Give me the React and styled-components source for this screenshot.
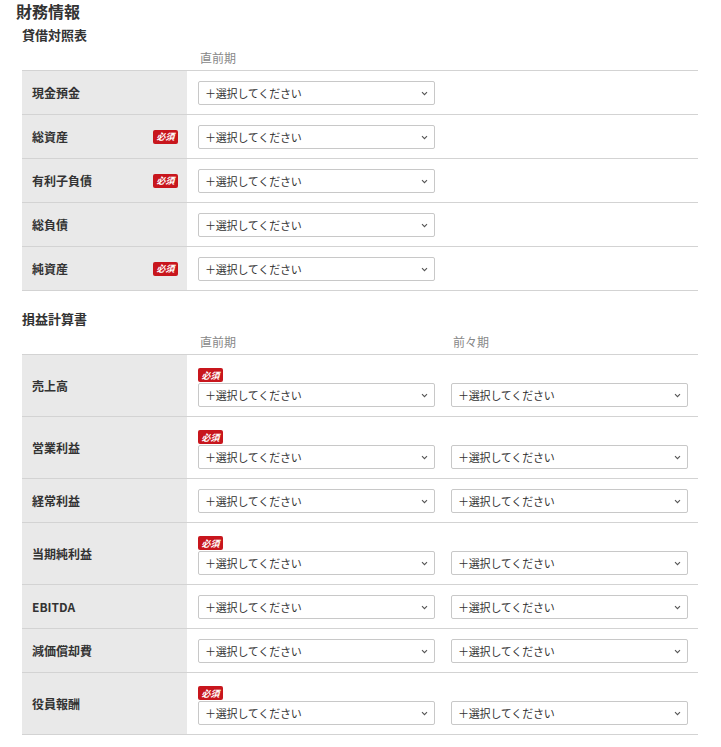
import React from "react";
import styled, { createGlobalStyle } from "styled-components";

const balanceRows = [
  { label: "現金預金" },
  { label: "総資産", required: true },
  { label: "有利子負債", required: true },
  { label: "総負債" },
  { label: "純資産", required: true },
];

const incomeRows = [
  { label: "売上高", required: true },
  { label: "営業利益", required: true },
  { label: "経常利益" },
  { label: "当期純利益", required: true },
  { label: "EBITDA" },
  { label: "減価償却費" },
  { label: "役員報酬", required: true },
];

function Select() {
  return (
    <SelectBox>
      <SelectText>＋選択してください</SelectText>
      <svg width="7" height="5" viewBox="0 0 7 5">
        <path d="M1 1.2l2.5 2.5 2.5-2.5" fill="none" stroke="#555" strokeWidth="1.1" />
      </svg>
    </SelectBox>
  );
}

export default function App() {
  return (
    <Page>
      <GlobalStyle />
      <Title>財務情報</Title>
      <Section>
        <SubTitle>貸借対照表</SubTitle>
        <HeadRow>
          <HeadCell>直前期</HeadCell>
        </HeadRow>
        {balanceRows.map((row) => (
          <Row key={row.label}>
            <LabelCell>
              <span>{row.label}</span>
              {row.required && <Badge>必須</Badge>}
            </LabelCell>
            <ValueCell>
              <Select />
            </ValueCell>
          </Row>
        ))}
      </Section>
      <Section $spaced>
        <SubTitle>損益計算書</SubTitle>
        <HeadRow>
          <HeadCell>直前期</HeadCell>
          <HeadCell>前々期</HeadCell>
        </HeadRow>
        {incomeRows.map((row) => (
          <Row key={row.label}>
            <LabelCell>
              <span>{row.label}</span>
            </LabelCell>
            <ValueCell>
              <Column>
                {row.required && <Badge $block>必須</Badge>}
                <Select />
              </Column>
              <Column>
                <Select />
              </Column>
            </ValueCell>
          </Row>
        ))}
      </Section>
    </Page>
  );
}

const GlobalStyle = createGlobalStyle`
  body {
    margin: 0;
    background: #fff;
    font-family: "Noto Sans CJK JP", "Noto Sans", sans-serif;
    color: #333;
  }
`;

const Page = styled.div`
  width: 721px;
  padding: 0 0 10px 16px;
  box-sizing: border-box;
`;

const Title = styled.h1`
  margin: 0;
  font-size: 16px;
  line-height: 22px;
  font-weight: 700;
  color: #333;
`;

const Section = styled.section`
  width: 676px;
  margin: ${({ $spaced }) => ($spaced ? "19px" : "4px")} 0 0 6px;
`;

const SubTitle = styled.h2`
  margin: 0;
  font-size: 13px;
  line-height: 18px;
  font-weight: 700;
  color: #333;
`;

const HeadRow = styled.div`
  display: grid;
  grid-template-columns: 237px 237px;
  column-gap: 16px;
  padding: 6px 0 4px 177px;
  border-bottom: 1px solid #d3d3d3;
`;

const HeadCell = styled.div`
  font-size: 12px;
  line-height: 16px;
  color: #888;
  padding-left: 1px;
`;

const Row = styled.div`
  display: grid;
  grid-template-columns: 165px 1fr;
  border-bottom: 1px solid #d3d3d3;
`;

const LabelCell = styled.div`
  display: flex;
  align-items: center;
  justify-content: space-between;
  background: #e9e9e9;
  padding: 0 9px 0 10px;
  font-size: 12px;
  line-height: 16px;
  font-weight: 700;
  color: #333;
`;

const ValueCell = styled.div`
  display: flex;
  gap: 16px;
  padding: 10px 10px 9px 11px;
  line-height: 16px;
`;

const Column = styled.div`
  display: flex;
  flex-direction: column;
  justify-content: flex-end;
  align-items: flex-start;
`;

const Badge = styled.span`
  display: inline-flex;
  align-items: center;
  justify-content: center;
  width: 25px;
  height: 14px;
  border-radius: 2px;
  background: #c8161d;
  color: #fff;
  font-size: 9px;
  font-weight: 700;
  font-style: italic;
  line-height: 1;
  margin: ${({ $block }) => ($block ? "3px 0 1px" : "0")};
`;

const SelectBox = styled.div`
  display: flex;
  align-items: center;
  justify-content: space-between;
  width: 237px;
  height: 24px;
  box-sizing: border-box;
  border: 1px solid #c8c8c8;
  border-radius: 2px;
  background: #fff;
  padding: 0 6px 0 6px;
`;

const SelectText = styled.span`
  font-size: 11px;
  line-height: 16px;
  color: #333;
  letter-spacing: -0.2px;
`;
